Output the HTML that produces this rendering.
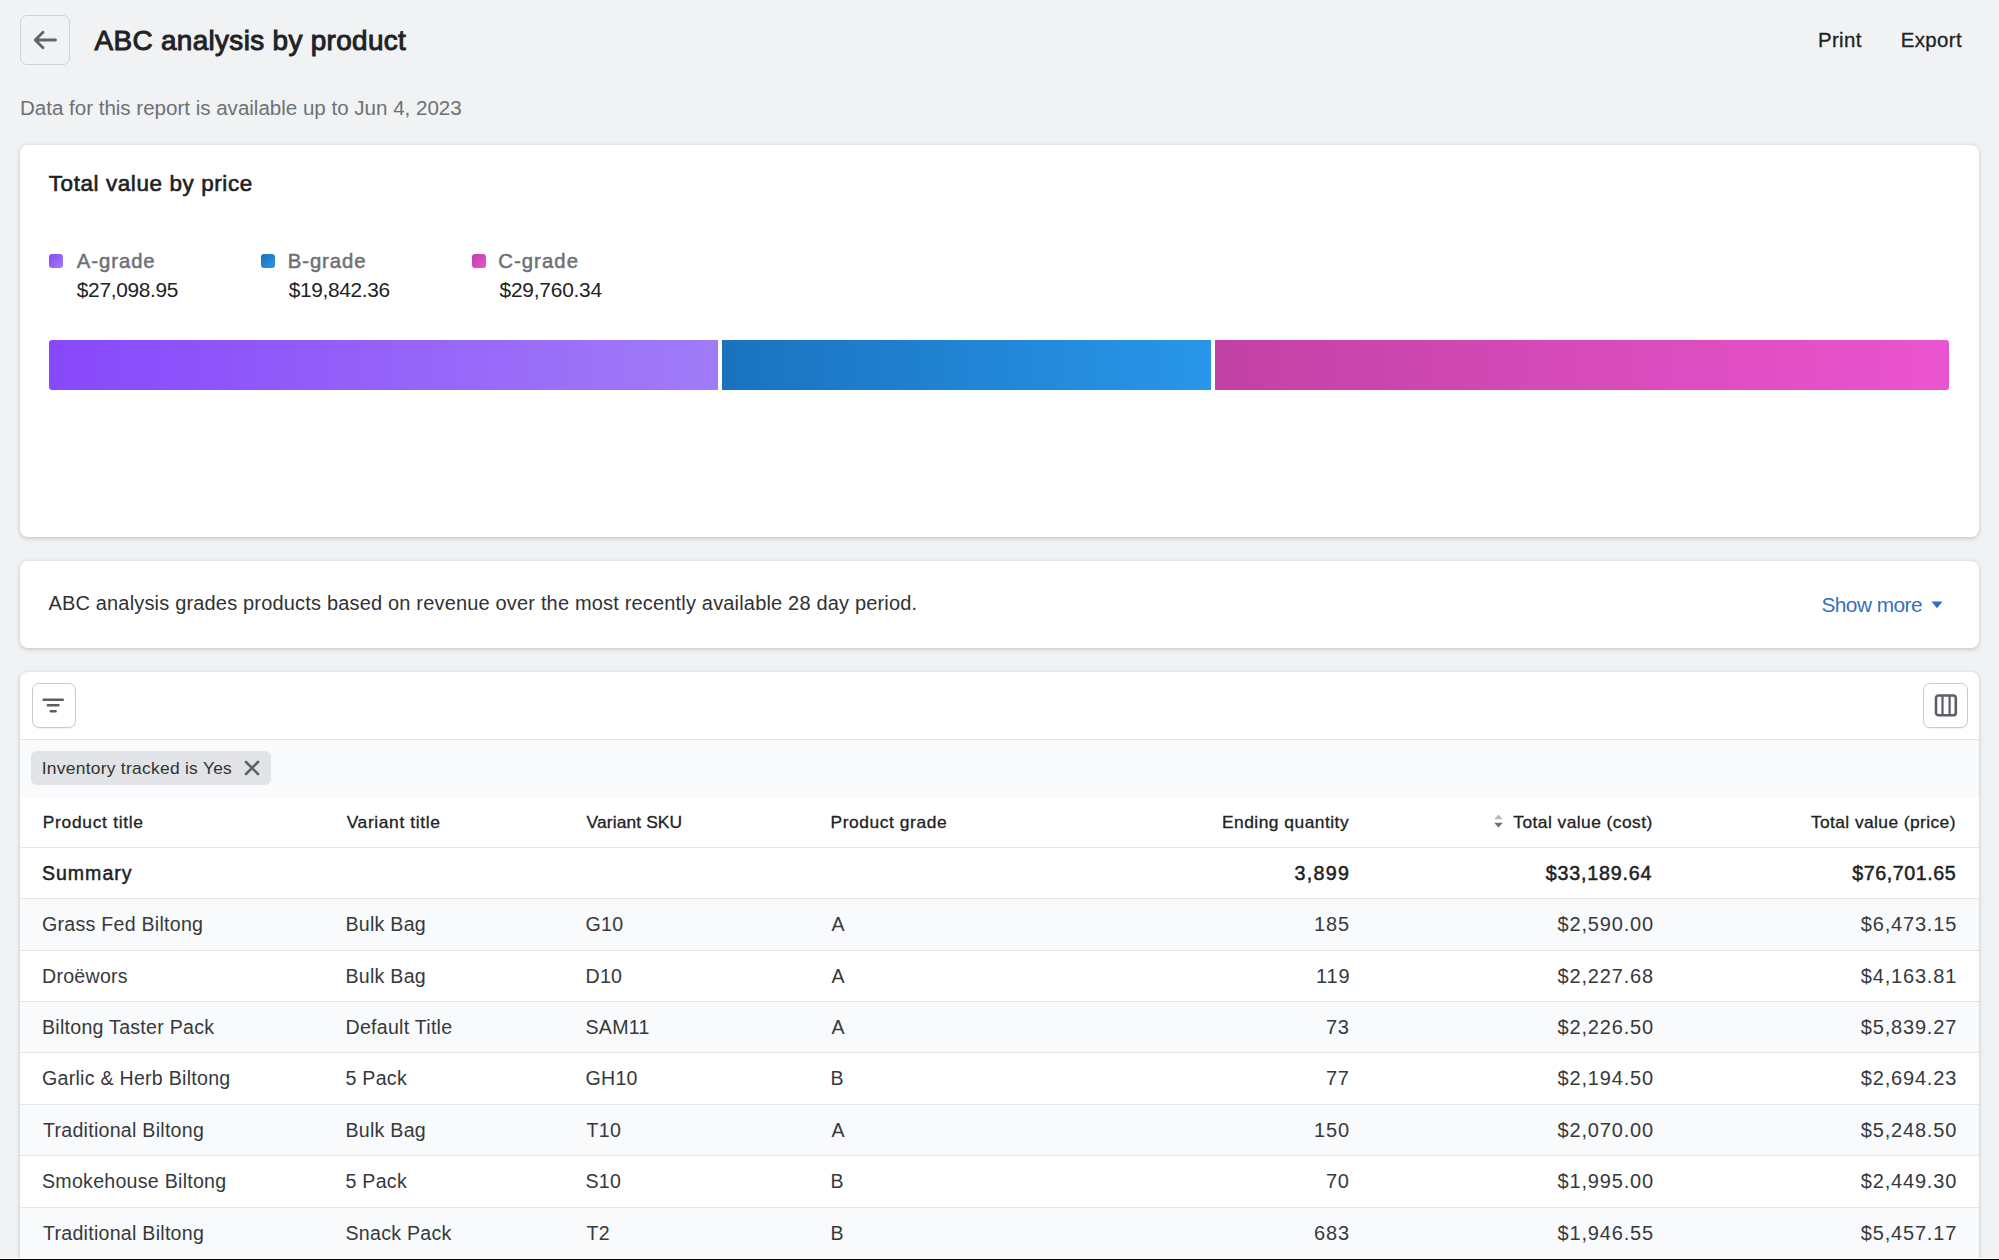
<!DOCTYPE html>
<html><head><meta charset="utf-8">
<style>
*{box-sizing:border-box;margin:0;padding:0}
html,body{width:1999px;height:1260px;overflow:hidden;background:#f1f2f4;font-family:"Liberation Sans",sans-serif;color:#202223}
.abs{position:absolute}
.t{position:absolute;white-space:nowrap;line-height:1}
.card{position:absolute;background:#fff;border-radius:7.5px;box-shadow:0 0 5px rgba(63,63,68,0.09),0 0 1px rgba(63,63,68,0.12),0 2px 4px rgba(63,63,68,0.15)}
.btn{position:absolute;border:1.3px solid #c9cccf;border-radius:7px;background:#fff;box-shadow:0 1px 0 rgba(0,0,0,0.05)}
.rw{position:absolute;left:20px;width:1959px;border-top:1px solid #e4e5e7;background:#fff}
.rw.g{background:#f9fafb}
</style></head><body>

<div class="abs" style="left:19.5px;top:14.5px;width:50.5px;height:50.5px;border:1.7px solid #cfd1d5;border-radius:7px"></div>
<svg class="abs" style="left:33px;top:30px" width="24" height="20" viewBox="0 0 24 20"><path d="M22.5 10H2.5M10 2.2L2.2 10L10 17.8" fill="none" stroke="#606367" stroke-width="2.8" stroke-linecap="round" stroke-linejoin="round"/></svg>

<div class="card" style="left:20px;top:145px;width:1959px;height:392px"></div>
<div class="abs" style="left:49px;top:254px;width:14px;height:14px;border-radius:3px;background:linear-gradient(135deg,#8648f5,#a57cfb)"></div>
<div class="abs" style="left:260.5px;top:254px;width:14px;height:14px;border-radius:3px;background:linear-gradient(135deg,#1b6fbd,#2b95ea)"></div>
<div class="abs" style="left:471.5px;top:254px;width:14px;height:14px;border-radius:3px;background:linear-gradient(135deg,#c13fa3,#e954cf)"></div>
<div class="abs" style="left:49px;top:340px;width:669px;height:50px;border-radius:3px 0 0 3px;background:linear-gradient(90deg,#8848fb,#a07cf8)"></div>
<div class="abs" style="left:722px;top:340px;width:489px;height:50px;background:linear-gradient(90deg,#1a72bf,#2896e9)"></div>
<div class="abs" style="left:1215px;top:340px;width:734px;height:50px;border-radius:0 3px 3px 0;background:linear-gradient(90deg,#c241a4,#eb54cf)"></div>

<div class="card" style="left:20px;top:561px;width:1959px;height:87px"></div>
<svg class="abs" style="left:1931px;top:601px" width="12" height="8" viewBox="0 0 12 8"><path d="M0.5 0.5H11.5L6 7.2Z" fill="#2c6ecb"/></svg>

<div class="card" style="left:20px;top:672px;width:1959px;height:700px;overflow:hidden">
  <div style="position:absolute;left:0;top:67px;width:1959px;height:58px;background:#f9fafb;border-top:1px solid #e1e3e5"></div>
</div>
<div class="rw" style="top:847px;height:51px"></div>
<div class="rw g" style="top:898px;height:52px"></div>
<div class="rw" style="top:950px;height:51px"></div>
<div class="rw g" style="top:1001px;height:51px"></div>
<div class="rw" style="top:1052px;height:52px"></div>
<div class="rw g" style="top:1104px;height:51px"></div>
<div class="rw" style="top:1155px;height:52px"></div>
<div class="rw g" style="top:1207px;height:51px"></div>
<div class="btn" style="left:31.5px;top:682.5px;width:44px;height:45px"></div>
<svg class="abs" style="left:40px;top:696px" width="28" height="20" viewBox="0 0 28 20"><path d="M3.6 3.8H22.7M7.9 9.3H18.4M10.8 15.2H15.6" stroke="#5c5f62" stroke-width="2.6" stroke-linecap="round"/></svg>
<div class="btn" style="left:1923px;top:682.5px;width:44.5px;height:45px"></div>
<svg class="abs" style="left:1933px;top:693px" width="25" height="25" viewBox="0 0 25 25"><rect x="3.0" y="2.5" width="19.8" height="19.8" rx="2.6" fill="none" stroke="#5c5f66" stroke-width="2.6"/><path d="M9.5 2.5V22.3M16.6 2.5V22.3" stroke="#5c5f66" stroke-width="2.2"/></svg>
<div class="abs" style="left:31px;top:751px;width:240px;height:34px;border-radius:6px;background:#e2e3e6"></div>
<svg class="abs" style="left:243px;top:759px" width="18" height="18" viewBox="0 0 18 18"><path d="M3 3L15 15M15 3L3 15" stroke="#5c6068" stroke-width="2.6" stroke-linecap="round"/></svg>
<svg class="abs" style="left:1493px;top:813px" width="11" height="16" viewBox="0 0 11 16"><path d="M5.5 1.5L9.8 6.3H1.2Z" fill="#b5b8bc"/><path d="M5.5 14.5L9.8 9.7H1.2Z" fill="#6d7175"/></svg>

<div class="t" style="left:94.50px;top:27.00px;font-size:27.90px;color:#202223;letter-spacing:0.341px;-webkit-text-stroke:0.97px #202223;">ABC analysis by product</div>
<div class="t" style="left:1817.90px;top:30.00px;font-size:20.43px;color:#202223;letter-spacing:0.400px;-webkit-text-stroke:0.3px #202223;">Print</div>
<div class="t" style="left:1900.80px;top:30.00px;font-size:20.43px;color:#202223;letter-spacing:0.360px;-webkit-text-stroke:0.3px #202223;">Export</div>
<div class="t" style="left:19.95px;top:98.00px;font-size:20.58px;color:#6d7175;letter-spacing:-0.019px;">Data for this report is available up to Jun 4, 2023</div>
<div class="t" style="left:48.75px;top:173.00px;font-size:22.46px;color:#202223;letter-spacing:0.592px;-webkit-text-stroke:0.62px #202223;">Total value by price</div>
<div class="t" style="left:76.80px;top:251.00px;font-size:20.29px;color:#6d7175;letter-spacing:0.950px;-webkit-text-stroke:0.51px #6d7175;">A-grade</div>
<div class="t" style="left:287.80px;top:251.00px;font-size:20.29px;color:#6d7175;letter-spacing:0.917px;-webkit-text-stroke:0.51px #6d7175;">B-grade</div>
<div class="t" style="left:498.20px;top:251.00px;font-size:20.29px;color:#6d7175;letter-spacing:1.083px;-webkit-text-stroke:0.51px #6d7175;">C-grade</div>
<div class="t" style="left:76.80px;top:280.00px;font-size:20.87px;color:#202223;letter-spacing:-0.311px;">$27,098.95</div>
<div class="t" style="left:288.80px;top:280.00px;font-size:20.87px;color:#202223;letter-spacing:-0.344px;">$19,842.36</div>
<div class="t" style="left:499.60px;top:280.00px;font-size:20.87px;color:#202223;letter-spacing:-0.211px;">$29,760.34</div>
<div class="t" style="left:48.40px;top:593.00px;font-size:20.00px;color:#303235;letter-spacing:0.174px;">ABC analysis grades products based on revenue over the most recently available 28 day period.</div>
<div class="t" style="left:1821.40px;top:595.00px;font-size:20.87px;color:#3670be;letter-spacing:-0.538px;">Show more</div>
<div class="t" style="left:41.70px;top:760.00px;font-size:17.39px;color:#303235;letter-spacing:0.287px;">Inventory tracked is Yes</div>
<div class="t" style="left:42.80px;top:814.00px;font-size:17.39px;color:#202223;letter-spacing:0.704px;-webkit-text-stroke:0.3px #202223;">Product title</div>
<div class="t" style="left:346.70px;top:814.00px;font-size:17.39px;color:#202223;letter-spacing:0.633px;-webkit-text-stroke:0.3px #202223;">Variant title</div>
<div class="t" style="left:586.50px;top:814.00px;font-size:17.39px;color:#202223;letter-spacing:0.130px;-webkit-text-stroke:0.3px #202223;">Variant SKU</div>
<div class="t" style="left:830.50px;top:814.00px;font-size:17.39px;color:#202223;letter-spacing:0.583px;-webkit-text-stroke:0.3px #202223;">Product grade</div>
<div class="t" style="left:1222.00px;top:814.00px;font-size:17.39px;color:#202223;letter-spacing:0.486px;-webkit-text-stroke:0.3px #202223;">Ending quantity</div>
<div class="t" style="left:1513.30px;top:814.00px;font-size:17.39px;color:#202223;letter-spacing:0.453px;-webkit-text-stroke:0.3px #202223;">Total value (cost)</div>
<div class="t" style="left:1810.90px;top:814.00px;font-size:17.39px;color:#202223;letter-spacing:0.411px;-webkit-text-stroke:0.3px #202223;">Total value (price)</div>
<div class="t" style="left:42.00px;top:864.00px;font-size:19.57px;color:#202223;letter-spacing:0.967px;-webkit-text-stroke:0.48px #202223;">Summary</div>
<div class="t" style="left:1294.40px;top:864.00px;font-size:19.71px;color:#202223;letter-spacing:1.300px;-webkit-text-stroke:0.49px #202223;">3,899</div>
<div class="t" style="left:1545.80px;top:864.00px;font-size:19.71px;color:#202223;letter-spacing:0.778px;-webkit-text-stroke:0.49px #202223;">$33,189.64</div>
<div class="t" style="left:1852.30px;top:864.00px;font-size:19.71px;color:#202223;letter-spacing:0.544px;-webkit-text-stroke:0.49px #202223;">$76,701.65</div>
<div class="t" style="left:42.00px;top:915.00px;font-size:19.60px;color:#36393c;letter-spacing:0.262px;">Grass Fed Biltong</div>
<div class="t" style="left:345.50px;top:915.00px;font-size:19.60px;color:#36393c;letter-spacing:0.262px;">Bulk Bag</div>
<div class="t" style="left:585.50px;top:915.00px;font-size:19.60px;color:#36393c;letter-spacing:0.262px;">G10</div>
<div class="t" style="left:831.50px;top:915.00px;font-size:19.60px;color:#36393c;letter-spacing:0.262px;">A</div>
<div class="t" style="left:1314.08px;top:914.00px;font-size:20.00px;color:#36393c;letter-spacing:0.812px;">185</div>
<div class="t" style="left:1557.60px;top:914.00px;font-size:20.00px;color:#36393c;letter-spacing:0.812px;">$2,590.00</div>
<div class="t" style="left:1860.80px;top:914.00px;font-size:20.00px;color:#36393c;letter-spacing:0.812px;">$6,473.15</div>
<div class="t" style="left:42.00px;top:967.00px;font-size:19.60px;color:#36393c;letter-spacing:0.262px;">Droëwors</div>
<div class="t" style="left:345.50px;top:967.00px;font-size:19.60px;color:#36393c;letter-spacing:0.262px;">Bulk Bag</div>
<div class="t" style="left:585.50px;top:967.00px;font-size:19.60px;color:#36393c;letter-spacing:0.262px;">D10</div>
<div class="t" style="left:831.50px;top:967.00px;font-size:19.60px;color:#36393c;letter-spacing:0.262px;">A</div>
<div class="t" style="left:1316.08px;top:966.00px;font-size:20.00px;color:#36393c;letter-spacing:0.812px;">119</div>
<div class="t" style="left:1557.60px;top:966.00px;font-size:20.00px;color:#36393c;letter-spacing:0.812px;">$2,227.68</div>
<div class="t" style="left:1860.80px;top:966.00px;font-size:20.00px;color:#36393c;letter-spacing:0.812px;">$4,163.81</div>
<div class="t" style="left:42.00px;top:1018.00px;font-size:19.60px;color:#36393c;letter-spacing:0.262px;">Biltong Taster Pack</div>
<div class="t" style="left:345.50px;top:1018.00px;font-size:19.60px;color:#36393c;letter-spacing:0.262px;">Default Title</div>
<div class="t" style="left:585.50px;top:1018.00px;font-size:19.60px;color:#36393c;letter-spacing:0.262px;">SAM11</div>
<div class="t" style="left:831.50px;top:1018.00px;font-size:19.60px;color:#36393c;letter-spacing:0.262px;">A</div>
<div class="t" style="left:1325.89px;top:1017.00px;font-size:20.00px;color:#36393c;letter-spacing:0.812px;">73</div>
<div class="t" style="left:1557.60px;top:1017.00px;font-size:20.00px;color:#36393c;letter-spacing:0.812px;">$2,226.50</div>
<div class="t" style="left:1860.80px;top:1017.00px;font-size:20.00px;color:#36393c;letter-spacing:0.812px;">$5,839.27</div>
<div class="t" style="left:42.00px;top:1069.00px;font-size:19.60px;color:#36393c;letter-spacing:0.262px;">Garlic &amp; Herb Biltong</div>
<div class="t" style="left:345.50px;top:1069.00px;font-size:19.60px;color:#36393c;letter-spacing:0.262px;">5 Pack</div>
<div class="t" style="left:585.50px;top:1069.00px;font-size:19.60px;color:#36393c;letter-spacing:0.262px;">GH10</div>
<div class="t" style="left:830.50px;top:1069.00px;font-size:19.60px;color:#36393c;letter-spacing:0.262px;">B</div>
<div class="t" style="left:1325.89px;top:1068.00px;font-size:20.00px;color:#36393c;letter-spacing:0.812px;">77</div>
<div class="t" style="left:1557.60px;top:1068.00px;font-size:20.00px;color:#36393c;letter-spacing:0.812px;">$2,194.50</div>
<div class="t" style="left:1860.80px;top:1068.00px;font-size:20.00px;color:#36393c;letter-spacing:0.812px;">$2,694.23</div>
<div class="t" style="left:43.00px;top:1121.00px;font-size:19.60px;color:#36393c;letter-spacing:0.262px;">Traditional Biltong</div>
<div class="t" style="left:345.50px;top:1121.00px;font-size:19.60px;color:#36393c;letter-spacing:0.262px;">Bulk Bag</div>
<div class="t" style="left:586.50px;top:1121.00px;font-size:19.60px;color:#36393c;letter-spacing:0.262px;">T10</div>
<div class="t" style="left:831.50px;top:1121.00px;font-size:19.60px;color:#36393c;letter-spacing:0.262px;">A</div>
<div class="t" style="left:1314.08px;top:1120.00px;font-size:20.00px;color:#36393c;letter-spacing:0.812px;">150</div>
<div class="t" style="left:1557.60px;top:1120.00px;font-size:20.00px;color:#36393c;letter-spacing:0.812px;">$2,070.00</div>
<div class="t" style="left:1860.80px;top:1120.00px;font-size:20.00px;color:#36393c;letter-spacing:0.812px;">$5,248.50</div>
<div class="t" style="left:42.00px;top:1172.00px;font-size:19.60px;color:#36393c;letter-spacing:0.262px;">Smokehouse Biltong</div>
<div class="t" style="left:345.50px;top:1172.00px;font-size:19.60px;color:#36393c;letter-spacing:0.262px;">5 Pack</div>
<div class="t" style="left:585.50px;top:1172.00px;font-size:19.60px;color:#36393c;letter-spacing:0.262px;">S10</div>
<div class="t" style="left:830.50px;top:1172.00px;font-size:19.60px;color:#36393c;letter-spacing:0.262px;">B</div>
<div class="t" style="left:1325.89px;top:1171.00px;font-size:20.00px;color:#36393c;letter-spacing:0.812px;">70</div>
<div class="t" style="left:1557.60px;top:1171.00px;font-size:20.00px;color:#36393c;letter-spacing:0.812px;">$1,995.00</div>
<div class="t" style="left:1860.80px;top:1171.00px;font-size:20.00px;color:#36393c;letter-spacing:0.812px;">$2,449.30</div>
<div class="t" style="left:43.00px;top:1224.00px;font-size:19.60px;color:#36393c;letter-spacing:0.262px;">Traditional Biltong</div>
<div class="t" style="left:345.50px;top:1224.00px;font-size:19.60px;color:#36393c;letter-spacing:0.262px;">Snack Pack</div>
<div class="t" style="left:586.50px;top:1224.00px;font-size:19.60px;color:#36393c;letter-spacing:0.262px;">T2</div>
<div class="t" style="left:830.50px;top:1224.00px;font-size:19.60px;color:#36393c;letter-spacing:0.262px;">B</div>
<div class="t" style="left:1314.08px;top:1223.00px;font-size:20.00px;color:#36393c;letter-spacing:0.812px;">683</div>
<div class="t" style="left:1557.60px;top:1223.00px;font-size:20.00px;color:#36393c;letter-spacing:0.812px;">$1,946.55</div>
<div class="t" style="left:1860.80px;top:1223.00px;font-size:20.00px;color:#36393c;letter-spacing:0.812px;">$5,457.17</div>

<div class="abs" style="left:0;top:1258px;width:1999px;height:1px;background:#fff"></div>
<div class="abs" style="left:0;top:1259px;width:1999px;height:1px;background:#000"></div>
</body></html>
